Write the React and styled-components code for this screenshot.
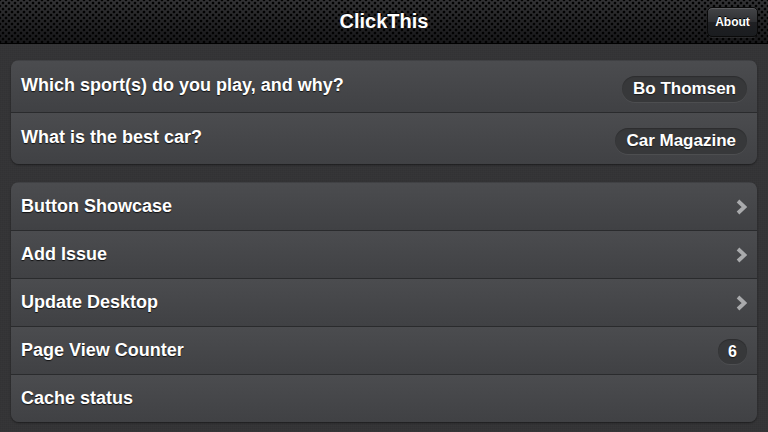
import React from "react";
import styled, { createGlobalStyle } from "styled-components";

const Global = createGlobalStyle`
  html, body { margin: 0; padding: 0; }
  body {
    background: #343436;
    font-family: "Liberation Sans", Arial, Helvetica, sans-serif;
    width: 768px;
    height: 432px;
    overflow: hidden;
  }
`;

const Page = styled.div`
  width: 768px;
  height: 432px;
  display: flex;
  flex-direction: column;
  background-color: #343436;
  background-image: repeating-linear-gradient(0deg, rgba(255,255,255,0.012) 0 1px, transparent 1px 2px),
    repeating-linear-gradient(90deg, rgba(0,0,0,0.03) 0 1px, transparent 1px 2px);
`;

const Toolbar = styled.header`
  position: relative;
  height: 43px;
  flex: none;
  border-bottom: 1px solid #000;
  display: flex;
  align-items: center;
  justify-content: center;
  background-color: #1c1c1e;
  background-image:
    radial-gradient(circle at 50% 50%, #020202 0 1.1px, transparent 1.7px),
    radial-gradient(circle at 50% 50%, #020202 0 1.1px, transparent 1.7px),
    linear-gradient(180deg, #333335 0%, #242426 50%, #18181a 100%);
  background-size: 6px 6px, 6px 6px, 100% 100%;
  background-position: 0 0, 3px 3px, 0 0;
`;

const Title = styled.h1`
  margin: 0;
  color: #fff;
  font-size: 20px;
  font-weight: bold;
  text-shadow: 0 -1px 0 rgba(0,0,0,0.8);
`;

const AboutButton = styled.button`
  position: absolute;
  right: 10px;
  top: 7px;
  height: 30px;
  width: 51px;
  padding: 0;
  border-radius: 5px;
  border: 1px solid #0a0a0a;
  background: linear-gradient(180deg, #434447 0%, #2e2f32 50%, #1f2023 51%, #1a1c1f 100%);
  box-shadow: inset 0 1px 0 rgba(255,255,255,0.12), 0 1px 0 rgba(255,255,255,0.08);
  color: #fff;
  font-family: inherit;
  font-size: 12px;
  font-weight: bold;
  text-shadow: 0 -1px 0 #000;
`;

const Content = styled.main`
  display: flex;
  flex-direction: column;
  gap: 18px;
  padding: 16px 11px 0 11px;
`;

const Panel = styled.section`
  border-radius: 8px;
  overflow: hidden;
  box-shadow: 0 1px 2px rgba(0,0,0,0.45);
  display: flex;
  flex-direction: column;
`;

const Row = styled.div`
  height: ${p => p.$h}px;
  display: flex;
  align-items: center;
  justify-content: space-between;
  padding: 0 10px;
  background: linear-gradient(180deg, #4b4c4f 0%, #404144 100%);
  border-top: 1px solid ${p => (p.$first ? "transparent" : "#2a2b2d")};
  box-sizing: border-box;
`;

const Label = styled.span`
  color: #fff;
  font-size: 18px;
  font-weight: bold;
  text-shadow: 0 1px 1px rgba(0,0,0,0.75);
  margin-top: ${p => (p.$up ? "-3px" : "0")};
`;

const Pill = styled.span`
  height: 26px;
  display: inline-flex;
  align-items: center;
  padding: 0 11px;
  margin-top: 4px;
  border-radius: 13px;
  background: #37383a;
  box-shadow: 0 1px 0 rgba(255,255,255,0.06), inset 0 1px 1px rgba(0,0,0,0.2);
  color: #fff;
  font-size: 17px;
  font-weight: bold;
  text-shadow: 0 1px 1px rgba(0,0,0,0.6);
`;

const Counter = styled(Pill)`
  height: 25px;
  padding: 0 10px;
  margin-top: 2px;
  font-size: 16px;
  border-radius: 12px;
`;

const Chevron = styled.svg`
  width: 11px;
  height: 16px;
  margin-right: 0;
`;

const Arrow = () => (
  <Chevron viewBox="0 0 11 16">
    <path d="M2 2 L8.5 8 L2 14" fill="none" stroke="#a9aaac" strokeWidth="3.8" strokeLinejoin="miter" />
  </Chevron>
);

const questions = [
  { q: "Which sport(s) do you play, and why?", by: "Bo Thomsen" },
  { q: "What is the best car?", by: "Car Magazine" },
];

const items = [
  { label: "Button Showcase", arrow: true },
  { label: "Add Issue", arrow: true },
  { label: "Update Desktop", arrow: true },
  { label: "Page View Counter", count: 6 },
  { label: "Cache status" },
];

export default function App() {
  return (
    <>
      <Global />
      <Page>
        <Toolbar>
          <Title>ClickThis</Title>
          <AboutButton>About</AboutButton>
        </Toolbar>
        <Content>
          <Panel>
            {questions.map((r, i) => (
              <Row key={r.q} $h={52} $first={i === 0}>
                <Label $up>{r.q}</Label>
                <Pill>{r.by}</Pill>
              </Row>
            ))}
          </Panel>
          <Panel>
            {items.map((r, i) => (
              <Row key={r.label} $h={48} $first={i === 0}>
                <Label>{r.label}</Label>
                {r.arrow && <Arrow />}
                {r.count != null && <Counter>{r.count}</Counter>}
              </Row>
            ))}
          </Panel>
        </Content>
      </Page>
    </>
  );
}
